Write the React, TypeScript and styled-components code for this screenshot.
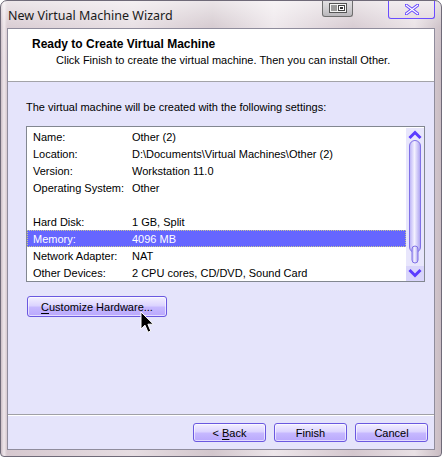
import React from "react";
import styled, { createGlobalStyle } from "styled-components";

const UI = `"Liberation Sans", Arial, sans-serif`;

const Global = createGlobalStyle`
  html, body { margin: 0; padding: 0; background: #ffffff; }
  body { font-family: ${UI}; }
  * { box-sizing: border-box; }
`;

const Win = styled.div`
  position: relative;
  width: 442px;
  height: 457px;
  display: flex;
  flex-direction: column;
  border: 1px solid #6f6a78;
  border-radius: 7px 7px 4px 4px;
  background:
    linear-gradient(180deg, rgba(255,255,255,0.55) 0px, rgba(255,255,255,0.1) 26px, rgba(255,255,255,0) 60px),
    linear-gradient(90deg, #cdbfc7 0px, #efe7eb 3px, #d6c8cf 6px, #e6dde2 30%, #d2c6cc 48%, #ede6ea 62%, #d4c7ce 80%, #e9e1e5 94%, #c9bcc3 100%);
  overflow: hidden;
`;

const TitleBar = styled.div`
  height: 27px;
  display: flex;
  align-items: flex-start;
  padding-left: 7px;
`;

const Title = styled.div`
  font-family: "Noto Sans", ${UI};
  font-size: 12.5px;
  line-height: 15px;
  margin-top: 7px;
  color: #1a1a1a;
  flex: 1;
`;

const Controls = styled.div`
  display: flex;
  align-items: flex-start;
  gap: 35px;
  margin-right: 6px;
  margin-top: -1px;
`;

const CtlBtn = styled.div<{ $w: number; $h: number; $close?: boolean }>`
  width: ${(p) => p.$w}px;
  height: ${(p) => p.$h}px;
  border: 1px solid ${(p) => (p.$close ? "#6a4cff" : "#6e6e6e")};
  border-top: none;
  border-radius: 0 0 3px 3px;
  background: ${(p) =>
    p.$close
      ? "linear-gradient(180deg, #f2eef0 0%, #e6dde2 100%)"
      : "linear-gradient(180deg, #e4e2e4 0%, #cfcdd0 55%, #b9b7bb 100%)"};
  display: flex;
  align-items: center;
  justify-content: center;
`;

const Client = styled.div`
  flex: 1;
  margin: 0 6px 6px 6px;
  border: 1px solid #8f8c9c;
  display: flex;
  flex-direction: column;
  background: #e5e4fb;
`;

const Header = styled.div`
  height: 53px;
  background: #ffffff;
  border-bottom: 1px solid #a3a3a8;
  padding: 7px 0 0 24px;
`;

const HeaderTitle = styled.div`
  font-size: 12px;
  font-weight: bold;
  line-height: 16px;
  color: #000;
`;

const HeaderSub = styled.div`
  font-size: 11px;
  line-height: 16px;
  color: #000;
  padding-left: 24px;
  white-space: nowrap;
`;

const Body = styled.div`
  flex: 1;
  padding: 18px 9px 0 18px;
  display: flex;
  flex-direction: column;
`;

const Intro = styled.div`
  font-size: 11px;
  line-height: 15px;
  color: #000;
  white-space: nowrap;
`;

const ListBox = styled.div`
  margin-top: 11px;
  height: 156px;
  border: 1px solid #828790;
  background: #ffffff;
  display: flex;
  padding: 1px 0 0 0;
`;

const Rows = styled.div`
  flex: 1;
  display: flex;
  flex-direction: column;
`;

const Row = styled.div<{ $sel?: boolean }>`
  height: 17px;
  display: grid;
  grid-template-columns: 99px 1fr;
  padding-left: 6px;
  font-size: 11px;
  line-height: 18px;
  white-space: nowrap;
  color: ${(p) => (p.$sel ? "#ffffff" : "#000000")};
  background: ${(p) => (p.$sel ? "#6666ff" : "transparent")};
  outline: ${(p) => (p.$sel ? "1px dotted #c8c890" : "none")};
  outline-offset: -1px;
`;

const Scroll = styled.div`
  width: 18px;
  background: #eceafd;
  display: flex;
`;

const PushBtn = styled.button<{ $w: number; $h: number }>`
  width: ${(p) => p.$w}px;
  height: ${(p) => p.$h}px;
  padding: 0;
  border: 1px solid #6a58e0;
  border-radius: 3px;
  background: linear-gradient(180deg, #f3f0ff 0%, #dcd4ff 45%, #c6b8ff 55%, #b9a8fc 100%);
  box-shadow: inset 0 0 0 1px rgba(255,255,255,0.6);
  font-family: ${UI};
  font-size: 11px;
  color: #000;
  display: flex;
  align-items: center;
  justify-content: center;
  u { text-decoration: underline; text-underline-offset: 2px; }
`;

const CustomizeWrap = styled.div`
  margin-top: 14px;
  margin-left: 1px;
`;

const Footer = styled.div`
  border-top: 1px solid #a0a0a6;
  box-shadow: inset 0 1px 0 #ffffff;
  padding: 8px 6px 7px 0;
  display: flex;
  justify-content: flex-end;
  gap: 8px;
`;

const Cursor = styled.svg`
  position: absolute;
  left: 139px;
  top: 310px;
`;

const data: [string, string][] = [
  ["Name:", "Other (2)"],
  ["Location:", "D:\\Documents\\Virtual Machines\\Other (2)"],
  ["Version:", "Workstation 11.0"],
  ["Operating System:", "Other"],
  ["", ""],
  ["Hard Disk:", "1 GB, Split"],
  ["Memory:", "4096 MB"],
  ["Network Adapter:", "NAT"],
  ["Other Devices:", "2 CPU cores, CD/DVD, Sound Card"],
];

export default function App() {
  return (
    <>
      <Global />
      <Win>
        <TitleBar>
          <Title>New Virtual Machine Wizard</Title>
          <Controls>
            <CtlBtn $w={31} $h={17}>
              <svg width="18" height="10" viewBox="0 0 18 10">
                <rect x="0.5" y="0.5" width="17" height="9" fill="#f4f4f4" stroke="#555" />
                <rect x="2" y="2" width="6" height="6" fill="#9a9a9a" />
                <rect x="9.5" y="2.5" width="6" height="5" fill="#ffffff" stroke="#444" />
                <rect x="11" y="4" width="3" height="2" fill="#333" />
              </svg>
            </CtlBtn>
            <CtlBtn $w={47} $h={19} $close>
              <svg width="14" height="11" viewBox="0 0 14 11">
                <path d="M1 1 L13 10 M13 1 L1 10" stroke="#6a4cff" strokeWidth="3.2" strokeLinecap="square" />
                <path d="M1 1 L13 10 M13 1 L1 10" stroke="#ffffff" strokeWidth="1.2" />
              </svg>
            </CtlBtn>
          </Controls>
        </TitleBar>
        <Client>
          <Header>
            <HeaderTitle>Ready to Create Virtual Machine</HeaderTitle>
            <HeaderSub>Click Finish to create the virtual machine. Then you can install Other.</HeaderSub>
          </Header>
          <Body>
            <Intro>The virtual machine will be created with the following settings:</Intro>
            <ListBox>
              <Rows>
                {data.map(([k, v], i) => (
                  <Row key={i} $sel={k === "Memory:"}>
                    <span>{k}</span>
                    <span>{v}</span>
                  </Row>
                ))}
              </Rows>
              <Scroll>
                <svg width="18" height="153" viewBox="0 0 18 153">
                  <defs>
                    <linearGradient id="thumb" x1="0" x2="1" y1="0" y2="0">
                      <stop offset="0" stopColor="#b9b0f6" />
                      <stop offset="0.45" stopColor="#f3f1ff" />
                      <stop offset="1" stopColor="#a99ff0" />
                    </linearGradient>
                  </defs>
                  <rect x="0" y="0" width="18" height="153" fill="#e8e6fc" />
                  <path d="M3.5 10 L9 4.5 L14.5 10" fill="none" stroke="#5b3cff" strokeWidth="3" />
                  <rect x="3.5" y="12.5" width="11" height="112" rx="5.5" fill="url(#thumb)" stroke="#7f70e6" />
                  <rect x="6" y="118" width="6" height="17" rx="3" fill="url(#thumb)" stroke="#7f70e6" />
                  <rect x="0" y="138" width="18" height="15" fill="#d9d5fb" />
                  <path d="M3.5 142 L9 147.5 L14.5 142" fill="none" stroke="#5b3cff" strokeWidth="3" />
                </svg>
              </Scroll>
            </ListBox>
            <CustomizeWrap>
              <PushBtn $w={140} $h={21}>
                <span>
                  <u>C</u>ustomize Hardware...
                </span>
              </PushBtn>
            </CustomizeWrap>
          </Body>
          <Footer>
            <PushBtn $w={73} $h={19}>
              <span>
                &lt; <u>B</u>ack
              </span>
            </PushBtn>
            <PushBtn $w={73} $h={19}>Finish</PushBtn>
            <PushBtn $w={73} $h={19}>Cancel</PushBtn>
          </Footer>
        </Client>
        <Cursor width="15" height="23" viewBox="0 0 15 23">
          <path
            d="M1 1 L1 18 L5 14.2 L8 21.2 L10.8 20 L7.9 13.2 L13.4 13.2 Z"
            fill="#000"
            stroke="#fff"
            strokeWidth="1"
            strokeLinejoin="miter"
          />
        </Cursor>
      </Win>
    </>
  );
}
